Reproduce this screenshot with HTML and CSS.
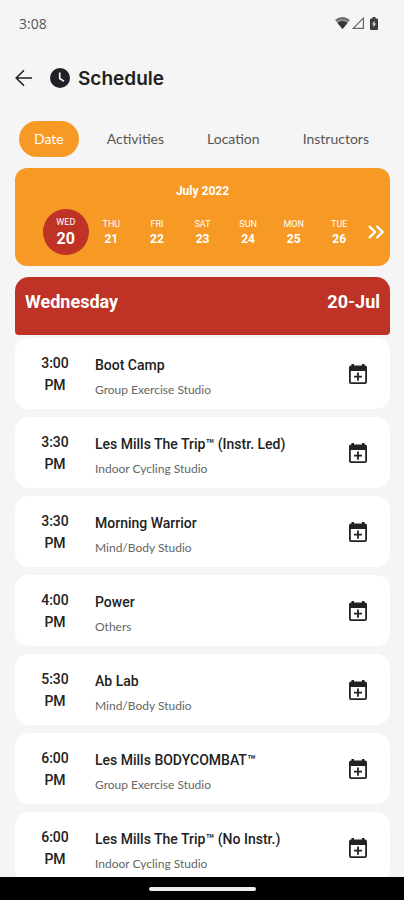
FILE: index.html
```html
<!DOCTYPE html>
<html lang="en">
<head>
<meta charset="utf-8">
<meta name="viewport" content="width=device-width, initial-scale=1">
<title>Schedule</title>
<link rel="stylesheet" href="styles.css">
</head>
<body>
<svg width="0" height="0" class="sprite" aria-hidden="true">
  <symbol id="add-event" viewBox="0 0 18 20">
    <path fill="currentColor" fill-rule="evenodd" d="M2.500 0h2.500v1.500h8V0h2.500v1.500H16a2 2 0 0 1 2 2V18a2 2 0 0 1-2 2H2a2 2 0 0 1-2-2V3.500a2 2 0 0 1 2-2h.500zM1.800 7v11.200h14.400V7zM8.100 8.500h1.800v3.200H13v1.800H9.900v3.200H8.100v-3.200H5v-1.800h3.100z"/>
  </symbol>
</svg>
<div class="status">
  <span>3:08</span>
  <span class="status-icons">
    <svg width="15" height="12" viewBox="0 0 15 12"><path d="M7.500 12 0 3C4-1 11-1 15 3z" fill="#8b8b8b"/><path d="M7.500 12 2.500 6c2.500-2.500 7.500-2.500 10 0z" fill="#333"/><path d="M1.500 3.500c3.500-3 8.500-3 12 0" fill="none" stroke="#555"/></svg>
    <svg width="12" height="12" viewBox="0 0 12 12"><path d="M1.200 11.400 11.400 1.200v10.200z" fill="none" stroke="#666" stroke-width="1.200"/></svg>
    <svg class="battery" width="8" height="13" viewBox="0 0 8 13"><path d="M2.500 0h3v1.500H7a1 1 0 0 1 1 1V12a1 1 0 0 1-1 1H1a1 1 0 0 1-1-1V2.500a1 1 0 0 1 1-1h1.500z" fill="#3d3d3d"/><path d="M4.500 3.500v3H6l-2.500 4v-3H2z" fill="#ddd"/></svg>
  </span>
</div>
<header class="header">
  <button class="back" aria-label="Back"><svg width="18" height="18" viewBox="0 0 18 18" fill="none" stroke="#222" stroke-width="1.600"><path d="M17 9H1.500M9 1.200 1.200 9 9 16.800"/></svg></button>
  <svg width="20" height="20" viewBox="0 0 20 20"><circle cx="10" cy="10" r="10" fill="#202124"/><path d="M9.700 4.500v6l4.300 2.800" fill="none" stroke="#f5f5f5" stroke-width="1.700"/></svg>
  <h1>Schedule</h1>
</header>
<nav class="tabs">
  <button class="tab active">Date</button>
  <button class="tab">Activities</button>
  <button class="tab">Location</button>
  <button class="tab">Instructors</button>
</nav>
<section class="calendar">
  <h2>July 2022</h2>
  <div class="week">
    <button class="day selected"><span>WED</span><b>20</b></button>
    <button class="day"><span>THU</span><b>21</b></button>
    <button class="day"><span>FRI</span><b>22</b></button>
    <button class="day"><span>SAT</span><b>23</b></button>
    <button class="day"><span>SUN</span><b>24</b></button>
    <button class="day"><span>MON</span><b>25</b></button>
    <button class="day"><span>TUE</span><b>26</b></button>
    <button class="next" aria-label="Next week"><svg width="16" height="14" viewBox="0 0 16 14" fill="none" stroke="#fff" stroke-width="2.400"><path d="m1 1 6 6-6 6M8.500 1l6 6-6 6"/></svg></button>
  </div>
</section>
<div class="banner"><h2>Wednesday</h2><span>20-Jul</span></div>
<main class="list">
  <article class="card"><time>3:00<br>PM</time><div class="info"><h3>Boot Camp</h3><p>Group Exercise Studio</p></div><button class="add" aria-label="Add to calendar"><svg width="18" height="20"><use href="#add-event"/></svg></button></article>
  <article class="card"><time>3:30<br>PM</time><div class="info"><h3>Les Mills The Trip™ (Instr. Led)</h3><p>Indoor Cycling Studio</p></div><button class="add" aria-label="Add to calendar"><svg width="18" height="20"><use href="#add-event"/></svg></button></article>
  <article class="card"><time>3:30<br>PM</time><div class="info"><h3>Morning Warrior</h3><p>Mind/Body Studio</p></div><button class="add" aria-label="Add to calendar"><svg width="18" height="20"><use href="#add-event"/></svg></button></article>
  <article class="card"><time>4:00<br>PM</time><div class="info"><h3>Power</h3><p>Others</p></div><button class="add" aria-label="Add to calendar"><svg width="18" height="20"><use href="#add-event"/></svg></button></article>
  <article class="card"><time>5:30<br>PM</time><div class="info"><h3>Ab Lab</h3><p>Mind/Body Studio</p></div><button class="add" aria-label="Add to calendar"><svg width="18" height="20"><use href="#add-event"/></svg></button></article>
  <article class="card"><time>6:00<br>PM</time><div class="info"><h3>Les Mills BODYCOMBAT™</h3><p>Group Exercise Studio</p></div><button class="add" aria-label="Add to calendar"><svg width="18" height="20"><use href="#add-event"/></svg></button></article>
  <article class="card"><time>6:00<br>PM</time><div class="info"><h3>Les Mills The Trip™ (No Instr.)</h3><p>Indoor Cycling Studio</p></div><button class="add" aria-label="Add to calendar"><svg width="18" height="20"><use href="#add-event"/></svg></button></article>
</main>
<footer class="system-bar"><span class="handle"></span></footer>
</body>
</html>
```
FILE: styles.css
```css
* { box-sizing: border-box; }
body {
  margin: 0;
  height: 100vh;
  display: flex;
  flex-direction: column;
  background: #f5f5f5;
  color: #222;
  font-family: Roboto, sans-serif;
}
body > * { flex-shrink: 0; }
h1, h2, h3, p { margin: 0; }
button {
  border: 0;
  padding: 0;
  background: none;
  color: inherit;
  font: inherit;
  cursor: pointer;
}
svg { display: block; }
.sprite { position: absolute; }
.status {
  display: flex;
  justify-content: space-between;
  align-items: center;
  height: 46px;
  padding: 0 26px 0 19px;
  font: 14px "Open Sans", sans-serif;
  color: #555;
}
.status-icons { display: flex; align-items: center; gap: 2px; }
.battery { margin-left: 4px; }
.header {
  display: flex;
  align-items: center;
  height: 64px;
  padding: 0 15px;
}
.back { margin-right: 17px; }
h1 {
  margin-left: 8px;
  font: 600 19px Inter, sans-serif;
}
.tabs {
  display: flex;
  justify-content: space-between;
  margin: 11px 20px 11px 19px;
  font: 14px/36px Lato, sans-serif;
  color: #555;
}
.tab {
  height: 36px;
  padding: 0 15px;
  border-radius: 18px;
}
.tab.active {
  background: #f79a25;
  color: #fff;
}
.calendar {
  height: 98px;
  margin: 0 14px 0 15px;
  border-radius: 12px;
  padding-top: 16px;
  background: #f79a25;
  color: #fff;
}
.calendar h2 {
  font-size: 12px;
  line-height: 14px;
  text-align: center;
}
.week {
  display: flex;
  align-items: center;
  margin-top: 11px;
  padding: 0 6px 0 28px;
}
.day {
  flex: 1;
  height: 46px;
  display: flex;
  flex-direction: column;
  align-items: center;
  justify-content: center;
  font-size: 9px;
  line-height: 13px;
}
.day b { font-size: 12px; line-height: 16px; }
.day.selected { border-radius: 50%; background: #be3325; }
.day.selected b { font-size: 16px; line-height: 20px; }
.next { margin-left: 6px; }
.banner {
  display: flex;
  justify-content: space-between;
  height: 58px;
  margin: 11px 14px 3px 15px;
  padding: 14px 10px 0;
  border-radius: 14px 14px 4px 4px;
  background: #be3325;
  color: #fff;
  font-size: 18px;
  font-weight: 700;
  line-height: 22px;
}
.banner h2 { font-size: inherit; }
.list {
  flex: 1 1 0;
  min-height: 0;
  display: flex;
  flex-direction: column;
  gap: 8px;
  padding: 0 14px 0 15px;
  overflow-y: auto;
  scrollbar-width: none;
}
.card {
  flex: none;
  display: flex;
  align-items: center;
  min-height: 71px;
  padding: 0 23px 0 16px;
  border-radius: 14px;
  background: #fff;
}
time {
  width: 48px;
  font-size: 14px;
  font-weight: 500;
  line-height: 22px;
  text-align: center;
}
.info { flex: 1; margin-left: 16px; padding-top: 6px; }
h3 {
  font-size: 14px;
  font-weight: 500;
  line-height: 26px;
}
.info p {
  font: 12px/24px Lato, sans-serif;
  color: #666;
}
.system-bar {
  display: flex;
  justify-content: center;
  align-items: center;
  height: 23px;
  background: #000;
}
.handle {
  width: 107px;
  height: 4px;
  border-radius: 2px;
  background: #eee;
}
```
